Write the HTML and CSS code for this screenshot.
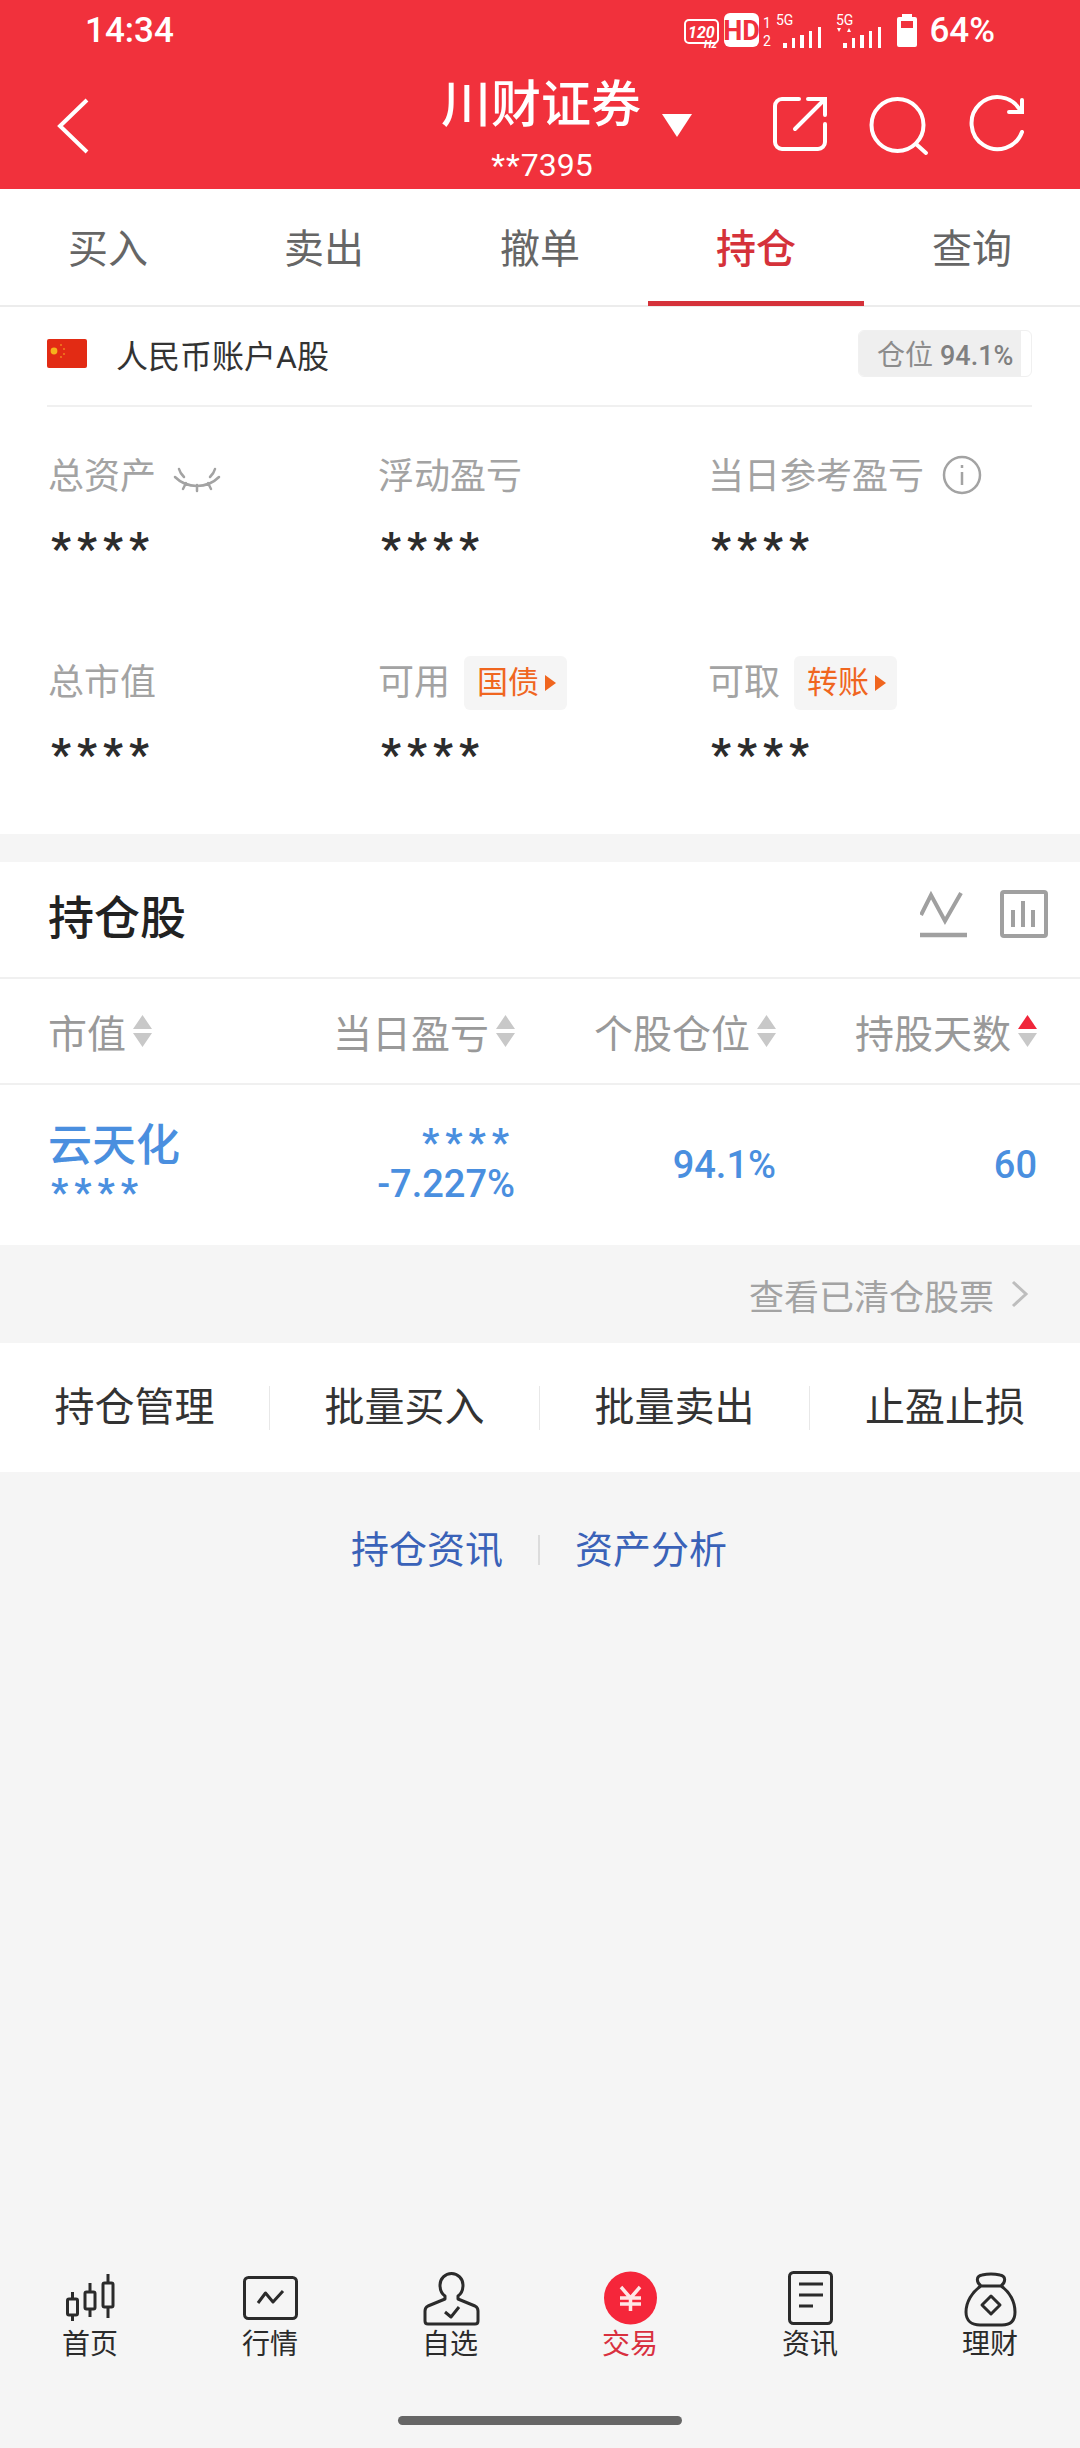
FILE: index.html
```html
<!DOCTYPE html>
<html lang="zh-CN">
<head>
<meta charset="utf-8">
<title>持仓</title>
<link rel="stylesheet" href="styles.css">
</head>
<body>
<div class="page">
  <header class="top">
    <div class="status">
      <span class="clock">14:34</span>
      <svg class="status-icons" viewBox="680 8 240 44" width="240" height="44">
        <rect x="684" y="20" width="33" height="23" rx="4" fill="none" stroke="#fff" stroke-width="2"/>
        <text x="687" y="38" class="st-120">120</text>
        <text x="703" y="48" class="st-hz">Hz</text>
        <rect x="723" y="13" width="35" height="34" rx="6" fill="#fff"/>
        <text x="740.5" y="40" text-anchor="middle" class="st-hd">HD</text>
        <text x="762" y="28" class="st-sim">1</text>
        <text x="762" y="46" class="st-sim">2</text>
        <text x="775" y="25" class="st-5g">5G</text>
        <path d="M782 43h4v5h-4zM791 38h3v10h-3zM799 35h4v13h-4zM808 31h3v17h-3zM817 27h3v21h-3z" fill="#fff"/>
        <text x="835" y="25" class="st-5g">5G</text>
        <path d="M836 28h4l-2 4zM846 32h4l-2-4z" fill="#fff"/>
        <path d="M842 43h4v5h-4zM851 38h3v10h-3zM859 35h4v13h-4zM868 31h3v17h-3zM877 27h3v21h-3z" fill="#fff"/>
        <path fill-rule="evenodd" d="M901 14h10v3h3a2 2 0 0 1 2 2v26a2 2 0 0 1-2 2h-16a2 2 0 0 1-2-2V19a2 2 0 0 1 2-2h3zM900 21v7h12v-7z" fill="#fff"/>
      </svg>
      <span class="battery">64%</span>
    </div>
    <div class="navbar">
      <svg class="back" viewBox="0 0 35 60" width="35" height="60"><path d="M31 4 4 30l27 26" fill="none" stroke="#fff" stroke-width="4"/></svg>
      <div class="broker">
        <div class="broker-text">
          <div class="broker-name">川财证券</div>
          <div class="broker-acct"><span class="acct-stars">**</span>7395</div>
        </div>
        <svg class="caret" viewBox="0 0 30 23" width="30" height="23"><path d="M0 0h30L15 23z" fill="#fff"/></svg>
      </div>
      <div class="nav-actions">
        <svg viewBox="770 96 60 60" width="60" height="60" class="ico-w"><path d="M799 101H782a7 7 0 0 0-7 7v36a7 7 0 0 0 7 7h36a7 7 0 0 0 7-7v-18M795 131l30-30M808 101h17v16"/></svg>
        <svg viewBox="867 94 64 64" width="64" height="64" class="ico-w"><circle cx="897.5" cy="125" r="26"/><path d="m916 144 10 9"/></svg>
        <svg viewBox="968 94 60 64" width="60" height="64" class="ico-w"><path d="M1022 132a26 26 0 1 1-2-22"/><path d="M1022 100v12h-13" stroke-linejoin="miter"/></svg>
      </div>
    </div>
  </header>

  <nav class="tabs">
    <span class="tab">买入</span>
    <span class="tab">卖出</span>
    <span class="tab">撤单</span>
    <span class="tab tab-on">持仓</span>
    <span class="tab">查询</span>
  </nav>

  <section class="account">
    <div class="acct-row">
      <svg class="flag" viewBox="0 0 40 29" width="40" height="29">
        <rect width="40" height="29" rx="2" fill="#e22b14"/>
        <circle cx="7" cy="12" r="3.4" fill="#f5b21c"/>
        <circle cx="14" cy="6" r="1" fill="#f0811c"/><circle cx="17" cy="10" r="1" fill="#f0811c"/>
        <circle cx="17" cy="15" r="1" fill="#f0811c"/><circle cx="14" cy="18" r="1" fill="#f0811c"/>
      </svg>
      <span class="acct-name">人民币账户A股</span>
      <div class="ratio"><div class="ratio-fill" style="width:94.1%"></div><span class="ratio-text">仓位 <b>94.1%</b></span></div>
    </div>
    <div class="summary">
      <div class="cell">
        <div class="cell-label">总资产
          <svg class="eye" viewBox="0 0 50 26" width="50" height="26"><path d="M3 10c12 12 32 12 44 0M7 2c1 4 3 6 5 8M43 2c-1 4-3 6-5 8M14 16l-3 6M25 18v6M36 16l3 6"/></svg>
        </div>
        <div class="mask">****</div>
      </div>
      <div class="cell"><div class="cell-label">浮动盈亏</div><div class="mask">****</div></div>
      <div class="cell">
        <div class="cell-label">当日参考盈亏
          <svg class="info" viewBox="0 0 40 40" width="40" height="40"><circle cx="20" cy="20" r="18" fill="none" stroke="#a3a3a3" stroke-width="2.5"/><path d="M20 17v13M20 10v3" stroke="#a3a3a3" stroke-width="2.5"/></svg>
        </div>
        <div class="mask">****</div>
      </div>
      <div class="cell"><div class="cell-label">总市值</div><div class="mask">****</div></div>
      <div class="cell">
        <div class="cell-label">可用<span class="tag">国债<i class="tag-arrow"></i></span></div>
        <div class="mask">****</div>
      </div>
      <div class="cell">
        <div class="cell-label">可取<span class="tag">转账<i class="tag-arrow"></i></span></div>
        <div class="mask">****</div>
      </div>
    </div>
  </section>

  <section class="holdings">
    <div class="hold-head">
      <h2 class="hold-title">持仓股</h2>
      <svg class="hold-ico" viewBox="0 0 48 48" width="48" height="48"><path d="M1 25 11 5l14 26L41 3" fill="none" stroke="#a0a0a0" stroke-width="4"/><path d="M0 45h47" stroke="#a0a0a0" stroke-width="4.5"/></svg>
      <svg class="hold-ico" viewBox="0 0 48 48" width="48" height="48"><rect x="2" y="2" width="44" height="44" rx="2" fill="none" stroke="#a0a0a0" stroke-width="4"/><path d="M13 20v17M23 11v26M33 20v17" stroke="#a0a0a0" stroke-width="4"/></svg>
    </div>
    <div class="grid grid-head">
      <div class="th th-left">市值<svg class="sort" viewBox="0 0 19 32" width="19" height="32"><path d="M9.5 0 19 14H0zM0 18h19L9.5 32z" fill="#c8c8c8"/></svg></div>
      <div class="th">当日盈亏<svg class="sort" viewBox="0 0 19 32" width="19" height="32"><path d="M9.5 0 19 14H0zM0 18h19L9.5 32z" fill="#c8c8c8"/></svg></div>
      <div class="th">个股仓位<svg class="sort" viewBox="0 0 19 32" width="19" height="32"><path d="M9.5 0 19 14H0zM0 18h19L9.5 32z" fill="#c8c8c8"/></svg></div>
      <div class="th">持股天数<svg class="sort" viewBox="0 0 19 32" width="19" height="32"><path d="M9.5 0 19 14H0z" fill="#f0263a"/><path d="M0 18h19L9.5 32z" fill="#c8c8c8"/></svg></div>
    </div>
    <div class="grid grid-row">
      <div class="td td-left">
        <div class="stock-name">云天化</div>
        <div class="mask mask-sm">****</div>
      </div>
      <div class="td td-pl">
        <div class="mask mask-sm">****</div>
        <div class="num">-7.227%</div>
      </div>
      <div class="td num">94.1%</div>
      <div class="td num">60</div>
    </div>
  </section>

  <div class="cleared">查看已清仓股票
    <svg class="chev" viewBox="0 0 20 30" width="20" height="30"><path d="m3 3 13 12L3 27" fill="none" stroke="#bdbdbd" stroke-width="3"/></svg>
  </div>

  <div class="actions">
    <span class="action">持仓管理</span>
    <span class="action">批量买入</span>
    <span class="action">批量卖出</span>
    <span class="action">止盈止损</span>
  </div>

  <div class="links">
    <a class="link">持仓资讯</a>
    <i class="link-sep"></i>
    <a class="link">资产分析</a>
  </div>

  <div class="spacer"></div>

  <footer class="tabbar">
    <div class="tb-item">
      <svg class="tb-ico" viewBox="0 0 60 60" width="60" height="60"><path d="M12.5 24v7M12.5 47v6M30 15v9M30 41v8M48 6v9M48 39v11"/><rect x="7.500" y="31" width="10" height="16" rx="1.500"/><rect x="25" y="24" width="10" height="17" rx="1.500"/><rect x="43" y="15" width="10" height="24" rx="1.500"/></svg>
      <span class="tb-label">首页</span>
    </div>
    <div class="tb-item">
      <svg class="tb-ico" viewBox="0 0 60 60" width="60" height="60"><rect x="4.500" y="9.500" width="52" height="41" rx="4"/><path d="m18 35 7.500-10 7.500 9 10-11"/></svg>
      <span class="tb-label">行情</span>
    </div>
    <div class="tb-item">
      <svg class="tb-ico" viewBox="0 0 60 60" width="60" height="60"><path d="M25 31v-3c-3-2-5-6-5-11a11.500 11.500 0 0 1 23 0c0 5-2 9-5 11v3l17 7c2 1 3 3 3 5v10c0 2-1 3-3 3H8c-2 0-3-1-3-3V43c0-2 1-4 3-5z"/><path d="m25 44 6 5 8-10"/></svg>
      <span class="tb-label">自选</span>
    </div>
    <div class="tb-item tb-on">
      <svg class="tb-ico" viewBox="0 0 60 60" width="60" height="60"><circle class="tb-disc" cx="30.500" cy="30" r="26.500"/><path class="tb-yen" d="m21 19 9.500 11L40 19M20 30h21M20 36h21M30.500 30v13"/></svg>
      <span class="tb-label">交易</span>
    </div>
    <div class="tb-item">
      <svg class="tb-ico" viewBox="0 0 60 60" width="60" height="60"><rect x="9.500" y="4.500" width="42" height="51" rx="4"/><path d="M19 16h24M19 27h24M19 38h14"/></svg>
      <span class="tb-label">资讯</span>
    </div>
    <div class="tb-item">
      <svg class="tb-ico" viewBox="0 0 60 60" width="60" height="60"><path d="M21 18c-5-4-5-10 1-11 5-1 13-1 18 0 6 1 6 7 1 11zM21 18C12 24 6 34 6 44c0 9 6 13 14 13h22c8 0 13-4 13-13 0-10-5-20-14-26"/><path d="m31 28 9 9-9 9-9-9z"/></svg>
      <span class="tb-label">理财</span>
    </div>
  </footer>
  <div class="home-bar"></div>
</div>
</body>
</html>
```

FILE: styles.css
```css
* { box-sizing: border-box; }
html, body { margin: 0; padding: 0; }
body { font-family: Roboto, "Noto Sans CJK SC", sans-serif; background: #f5f5f5; }

.page { width: 1080px; height: 2448px; display: flex; flex-direction: column; background: #f5f5f5; overflow: hidden; }

/* red header */
.top { background: #f1313c; height: 189px; color: #fff; }
.status { height: 62px; display: flex; align-items: center; padding: 0 85px; position: relative; }
.clock { font-size: 35px; font-weight: 500; line-height: 62px; }
.status-icons { margin-left: auto; margin-right: 8px; margin-top: -2px; flex: none; }
.status-icons text { fill: #fff; font-family: Roboto, sans-serif; }
.st-120 { font-size: 16px; font-style: italic; font-weight: 700; }
.st-hz { font-size: 11px; font-style: italic; font-weight: 700; }
.status-icons .st-hd { fill: #f1313c; font-size: 27px; font-weight: 700; }
.st-sim { font-size: 14px; }
.st-5g { font-size: 14px; }
.battery { font-size: 35px; font-weight: 500; line-height: 62px; }

.navbar { height: 127px; display: grid; grid-template-columns: 441px 251px 1fr; position: relative; }
.back { margin: 34px 0 0 56px; }
.broker { display: flex; align-items: flex-start; }
.broker-text { width: 200px; text-align: center; }
.broker-name { font-size: 50px; line-height: 60px; margin-top: 13px; font-weight: 500; white-space: nowrap; }
.broker-acct { font-size: 32px; line-height: 36px; margin-top: 12px; padding-left: 2px; }
.acct-stars { letter-spacing: 1px; }
.caret { margin: 52px 0 0 21px; flex: none; }
.nav-actions { display: flex; gap: 37px; padding-top: 32px; padding-left: 78px; align-items: flex-start; }
.ico-w { fill: none; stroke: #fff; stroke-width: 4; stroke-linecap: round; flex: none; }

/* trade tabs */
.tabs { height: 118px; background: #fff; display: grid; grid-template-columns: repeat(5, 216px); border-bottom: 2px solid #ececec; }
.tab { font-size: 40px; line-height: 122px; text-align: center; color: #666; }
.tab-on { color: #d5323a; font-weight: 500; border-bottom: 5px solid #d5323a; height: 117px; }

/* account summary */
.account { background: #fff; height: 527px; padding: 0 48px 0 47px; }
.acct-row { height: 100px; display: flex; align-items: center; border-bottom: 2px solid #f0f0f0; padding-bottom: 0; }
.flag { flex: none; margin-top: -6px; }
.acct-name { font-size: 32px; color: #333; margin-left: 29px; margin-top: -4px; }
.ratio { margin-left: auto; margin-top: -6px; width: 174px; height: 47px; position: relative; border: 1px solid #f0f0f0; border-radius: 6px; overflow: hidden; display: flex; align-items: center; padding-left: 18px; }
.ratio-fill { position: absolute; left: 0; top: 0; bottom: 0; background: #efefef; }
.ratio-text { position: relative; font-size: 28px; color: #8c8c8c; white-space: nowrap; }
.ratio-text b { font-size: 27px; font-weight: 500; color: #808080; }

.summary { display: grid; grid-template-columns: 330px 330px 1fr; grid-auto-rows: 206px; padding-top: 46px; padding-left: 1px; }
.cell-label { height: 48px; font-size: 36px; line-height: 48px; color: #a3a3a3; display: flex; align-items: center; white-space: nowrap; }
.eye { fill: none; stroke: #a3a3a3; stroke-width: 2.5; margin-left: 16px; margin-top: 6px; stroke-linecap: round; }
.info { margin-left: 18px; margin-top: -4px; }
.tag { display: inline-flex; align-items: center; gap: 6px; height: 54px; margin-left: 14px; padding: 0 11px 0 13px; background: #f5f5f5; border-radius: 6px; color: #f0661f; font-size: 31px; }
.tag-arrow { display: block; width: 0; height: 0; border-left: 11px solid #f0661f; border-top: 8px solid transparent; border-bottom: 8px solid transparent; }
.mask { font-size: 44px; font-weight: 700; color: #2c2c2c; letter-spacing: 6px; line-height: 44px; margin-top: 26px; padding-left: 3px; height: 44px; }

/* holdings table */
.holdings { background: #fff; margin-top: 28px; }
.hold-head { height: 117px; border-bottom: 2px solid #f0f0f0; display: flex; align-items: center; padding: 0 32px 0 48px; gap: 32px; }
.hold-title { flex: 1; margin: 0; font-size: 46px; font-weight: 500; color: #222; line-height: 60px; margin-top: -4px; }
.hold-ico { flex: none; margin-top: -12px; }
.grid { display: grid; grid-template-columns: 206px repeat(3, 261px); padding: 0 43px 0 48px; }
.grid-head { height: 106px; border-bottom: 2px solid #f0f0f0; }
.th { display: flex; justify-content: flex-end; align-items: center; gap: 7px; font-size: 39px; color: #999; white-space: nowrap; }
.th-left { justify-content: flex-start; }
.sort { flex: none; }
.grid-row { height: 160px; }
.td { display: flex; flex-direction: column; justify-content: center; align-items: flex-end; color: #4a8fdf; }
.td-left { align-items: flex-start; }
.stock-name { font-size: 44px; font-weight: 500; line-height: 56px; color: #4a8fdf; }
.num { font-size: 38px; font-weight: 500; color: #4a8fdf; line-height: 44px; }
.mask-sm { font-size: 38px; color: #4a8fdf; letter-spacing: 6px; margin-top: 0; line-height: 38px; height: 38px; }

/* footer strips */
.cleared { height: 98px; display: flex; justify-content: flex-end; align-items: center; gap: 16px; padding-right: 50px; font-size: 35px; color: #a3a3a3; white-space: nowrap; }
.chev { flex: none; }
.actions { height: 129px; background: #fff; display: grid; grid-template-columns: repeat(4, 270px); align-items: center; }
.action { font-size: 40px; color: #333; text-align: center; line-height: 44px; border-right: 1px solid #e8e8e8; }
.action:last-child { border-right: 0; }
.links { display: flex; justify-content: center; align-items: center; padding-top: 55px; height: 100px; margin-left: -2px; }
.link { font-size: 38px; color: #3a62b8; line-height: 44px; width: 152px; }
.link-sep { display: block; width: 2px; height: 30px; background: #dcdcdc; margin: 0 35px; }

.spacer { flex: 1; }

/* bottom navigation */
.tabbar { display: grid; grid-template-columns: repeat(6, 180px); }
.tb-item { display: flex; flex-direction: column; align-items: center; }
.tb-ico { fill: none; stroke: #2b2b2b; stroke-width: 3; stroke-linejoin: round; }
.tb-label { font-size: 28px; line-height: 34px; color: #2b2b2b; }
.tb-on .tb-label { color: #d9303f; }
.tb-disc { fill: #f5263a; stroke: none; }
.tb-yen { stroke: #ffe6e6; stroke-width: 3.5; stroke-linejoin: miter; }
.home-bar { width: 284px; height: 9px; border-radius: 5px; background: #666; margin: 54px auto 23px; }
```
